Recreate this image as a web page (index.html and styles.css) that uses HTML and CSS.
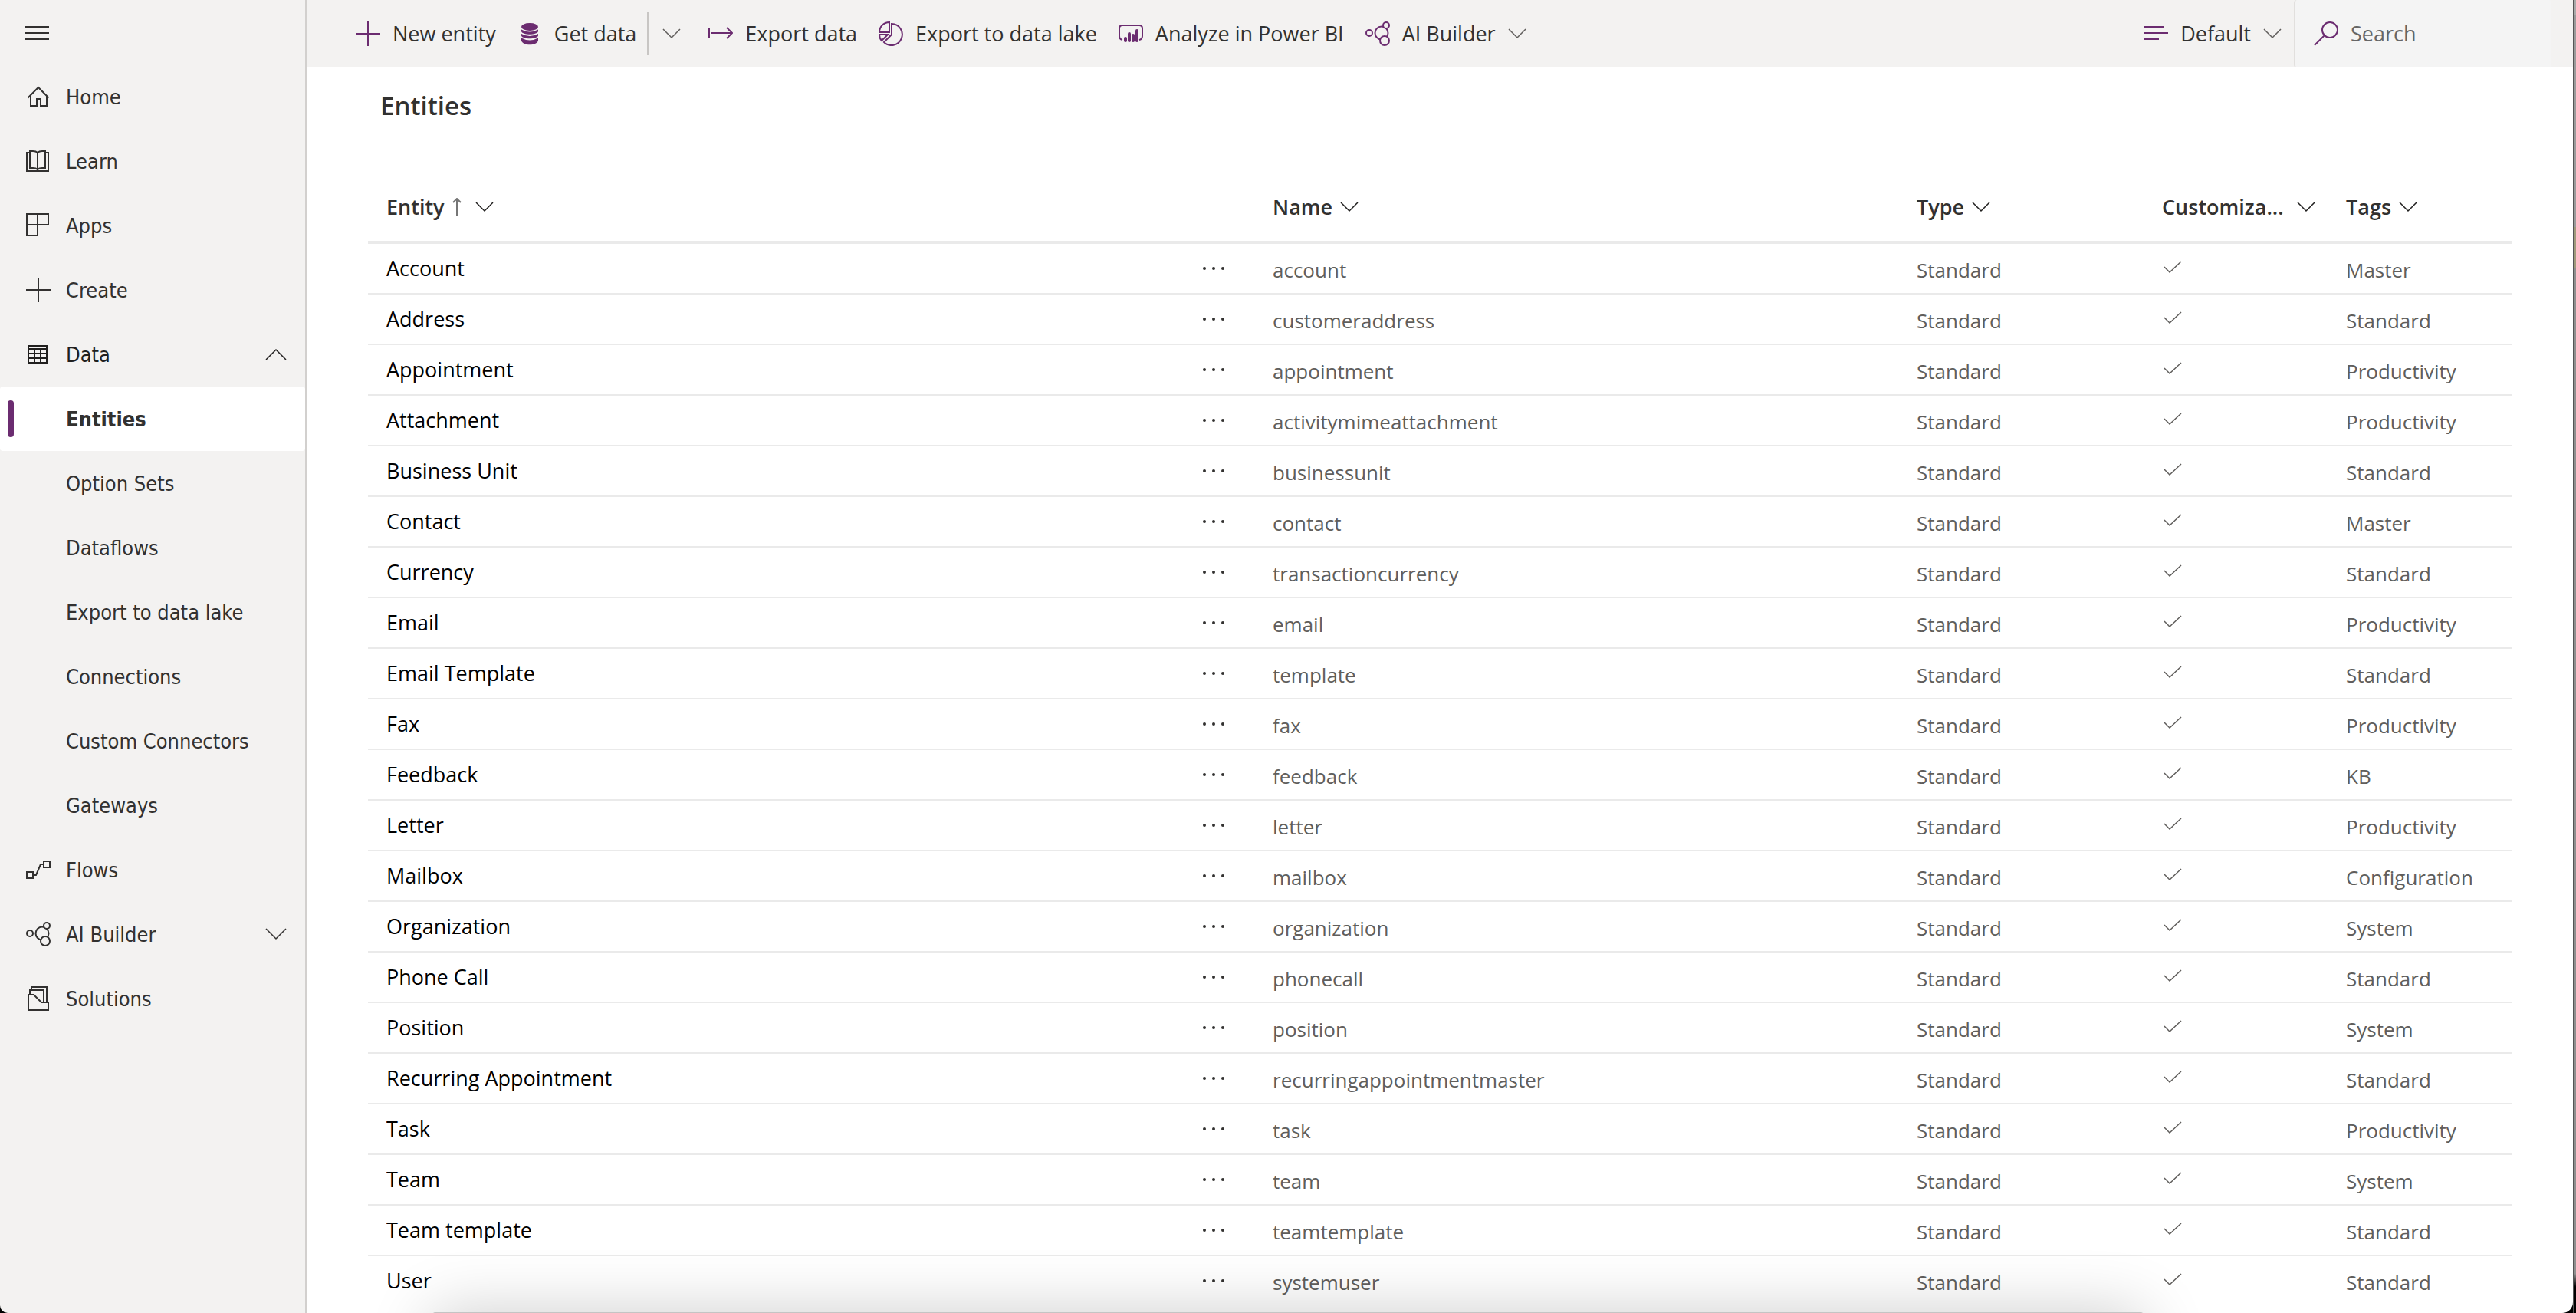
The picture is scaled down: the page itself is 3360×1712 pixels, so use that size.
FILE: index.html
```html
<!DOCTYPE html>
<html lang="en">
<head>
<meta charset="utf-8">
<title>Entities</title>
<link rel="stylesheet" href="styles.css">
</head>
<body>
<svg class="sprite" aria-hidden="true">
  <symbol id="chevron" viewBox="0 0 24 14"><path d="M1 1l11 11L23 1"/></symbol>
  <symbol id="plus" viewBox="0 0 32 32"><path d="M0 16H32M16 0V32"/></symbol>
  <symbol id="check" viewBox="0 0 24 16"><path d="M1 8l7 7L23 1"/></symbol>
  <symbol id="dots" viewBox="0 0 30 6"><circle cx="3" cy="3" r="2"/><circle cx="15" cy="3" r="2"/><circle cx="27" cy="3" r="2"/></symbol>
  <symbol id="ai" viewBox="0 0 32 32"><circle cx="21" cy="15" r="8.5"/><circle class="knock" cx="5" cy="15" r="4"/><circle class="knock" cx="27" cy="5" r="4"/><circle class="knock" cx="25" cy="25" r="6"/></symbol>
</svg>
<div class="shell">
  <nav class="sidebar" aria-label="Main">
    <button class="menu" aria-label="Toggle navigation"><svg class="icon" viewBox="0 0 32 32"><path d="M0 8H32M0 16H32M0 24H32"/></svg></button>
    <a class="nav" href="#"><svg class="icon" viewBox="0 0 32 32"><path d="M2.500 17.500L16 4l13.500 13.500M6 15V28h8V19h5v9h8V15"/></svg><span>Home</span></a>
    <a class="nav" href="#"><svg class="icon" viewBox="0 0 32 32"><path d="M5 5H1V29H29V5H25M5 3h4q4 0 6 2q2-2 6-2h4V25h-4q-4 0-6 2q-2-2-6-2H5zM15 5V28"/></svg><span>Learn</span></a>
    <a class="nav" href="#"><svg class="icon" viewBox="0 0 32 32"><path d="M1 1H29V15H1zM15 1V29H1V1"/></svg><span>Apps</span></a>
    <a class="nav" href="#"><svg class="icon"><use href="#plus"/></svg><span>Create</span></a>
    <button class="nav open" aria-expanded="true"><svg class="icon" viewBox="0 0 32 32"><path d="M3 5H27V27H3zM3 9H27M3 15H27M3 21H27M11 9V27M19 9V27"/></svg><span>Data</span><svg class="toggle up" viewBox="0 0 28 16"><path d="M1 1l13 13L27 1"/></svg></button>
    <a class="nav sub current" href="#" aria-current="page"><span>Entities</span></a>
    <a class="nav sub" href="#"><span>Option Sets</span></a>
    <a class="nav sub" href="#"><span>Dataflows</span></a>
    <a class="nav sub" href="#"><span>Export to data lake</span></a>
    <a class="nav sub" href="#"><span>Connections</span></a>
    <a class="nav sub" href="#"><span>Custom Connectors</span></a>
    <a class="nav sub" href="#"><span>Gateways</span></a>
    <a class="nav" href="#"><svg class="icon" viewBox="0 0 32 32"><path d="M1 19H9V27H1zM23 5H31V13H23zM9 23H13L19 9H23"/></svg><span>Flows</span></a>
    <button class="nav" aria-expanded="false"><svg class="icon"><use href="#ai"/></svg><span>AI Builder</span><svg class="toggle" viewBox="0 0 28 16"><path d="M1 1l13 13L27 1"/></svg></button>
    <a class="nav" href="#"><svg class="icon" viewBox="0 0 32 32"><path d="M3 31V11H10L20 21H29V31zM5 11V5H23V21M7 5V1H27V21"/></svg><span>Solutions</span></a>
  </nav>
  <div class="page">
    <header class="toolbar">
      <button class="command"><svg class="icon"><use href="#plus"/></svg>New entity</button>
      <div class="split">
        <button class="command"><svg class="icon solid" viewBox="0 0 32 32"><ellipse cx="16" cy="7" rx="11" ry="5"/><path d="M5 10.500q11 6 22 0V13c-2 5-20 5-22 0zM5 16q11 6 22 0v2.500c-2 5-20 5-22 0zM5 21.500q11 6 22 0V25c-2 7-20 7-22 0z"/></svg>Get data</button>
        <button class="more" aria-label="More data options"><svg class="chevron"><use href="#chevron"/></svg></button>
      </div>
      <button class="command"><svg class="icon" viewBox="0 0 32 32"><path d="M1 8V22M4 15H31M24 8l7 7-7 7"/></svg>Export data</button>
      <button class="command"><svg class="icon" viewBox="0 0 32 32"><path d="M14 1A13 13 0 0 0 1 14H14zM17 3A14 14 0 1 1 7 27L17 17zM1 17H12L4 25Q1 22 1 17z"/></svg>Export to data lake</button>
      <button class="command"><svg class="icon" viewBox="0 0 32 32"><path d="M5 24Q1 23 1 19V9q0-4 4-4H27q4 0 4 4V19q0 4-4 5"/><path class="bars" d="M9 22V25M14 16V25M19 18V25M24 12V25"/></svg>Analyze in Power BI</button>
      <button class="command"><svg class="icon"><use href="#ai"/></svg>AI Builder<svg class="chevron"><use href="#chevron"/></svg></button>
      <button class="command view"><svg class="icon" viewBox="0 0 32 32"><path d="M0 7H26M0 15H32M0 23H20"/></svg>Default<svg class="chevron"><use href="#chevron"/></svg></button>
      <label class="search"><svg class="icon" viewBox="0 0 32 32"><circle cx="21" cy="11" r="10"/><path d="M14 18L1 31"/></svg><input type="search" placeholder="Search" aria-label="Search"></label>
    </header>
    <main class="content">
      <h1>Entities</h1>
      <table>
        <colgroup><col><col class="c-more"><col class="c-name"><col class="c-type"><col class="c-custom"><col class="c-tags"></colgroup>
        <thead><tr>
          <th colspan="2"><button>Entity<svg class="sort" viewBox="0 0 12 24"><path d="M6 24V1M1 6l5-5 5 5"/></svg><svg class="chevron"><use href="#chevron"/></svg></button></th>
          <th><button>Name<svg class="chevron"><use href="#chevron"/></svg></button></th>
          <th><button>Type<svg class="chevron"><use href="#chevron"/></svg></button></th>
          <th><button class="spread">Customiza...<svg class="chevron"><use href="#chevron"/></svg></button></th>
          <th><button>Tags<svg class="chevron"><use href="#chevron"/></svg></button></th>
        </tr></thead>
        <tbody>
          <tr><td><a href="#">Account</a></td><td><button aria-label="More"><svg class="dots"><use href="#dots"/></svg></button></td><td>account</td><td>Standard</td><td><svg class="check"><use href="#check"/></svg></td><td>Master</td></tr>
          <tr><td><a href="#">Address</a></td><td><button aria-label="More"><svg class="dots"><use href="#dots"/></svg></button></td><td>customeraddress</td><td>Standard</td><td><svg class="check"><use href="#check"/></svg></td><td>Standard</td></tr>
          <tr><td><a href="#">Appointment</a></td><td><button aria-label="More"><svg class="dots"><use href="#dots"/></svg></button></td><td>appointment</td><td>Standard</td><td><svg class="check"><use href="#check"/></svg></td><td>Productivity</td></tr>
          <tr><td><a href="#">Attachment</a></td><td><button aria-label="More"><svg class="dots"><use href="#dots"/></svg></button></td><td>activitymimeattachment</td><td>Standard</td><td><svg class="check"><use href="#check"/></svg></td><td>Productivity</td></tr>
          <tr><td><a href="#">Business Unit</a></td><td><button aria-label="More"><svg class="dots"><use href="#dots"/></svg></button></td><td>businessunit</td><td>Standard</td><td><svg class="check"><use href="#check"/></svg></td><td>Standard</td></tr>
          <tr><td><a href="#">Contact</a></td><td><button aria-label="More"><svg class="dots"><use href="#dots"/></svg></button></td><td>contact</td><td>Standard</td><td><svg class="check"><use href="#check"/></svg></td><td>Master</td></tr>
          <tr><td><a href="#">Currency</a></td><td><button aria-label="More"><svg class="dots"><use href="#dots"/></svg></button></td><td>transactioncurrency</td><td>Standard</td><td><svg class="check"><use href="#check"/></svg></td><td>Standard</td></tr>
          <tr><td><a href="#">Email</a></td><td><button aria-label="More"><svg class="dots"><use href="#dots"/></svg></button></td><td>email</td><td>Standard</td><td><svg class="check"><use href="#check"/></svg></td><td>Productivity</td></tr>
          <tr><td><a href="#">Email Template</a></td><td><button aria-label="More"><svg class="dots"><use href="#dots"/></svg></button></td><td>template</td><td>Standard</td><td><svg class="check"><use href="#check"/></svg></td><td>Standard</td></tr>
          <tr><td><a href="#">Fax</a></td><td><button aria-label="More"><svg class="dots"><use href="#dots"/></svg></button></td><td>fax</td><td>Standard</td><td><svg class="check"><use href="#check"/></svg></td><td>Productivity</td></tr>
          <tr><td><a href="#">Feedback</a></td><td><button aria-label="More"><svg class="dots"><use href="#dots"/></svg></button></td><td>feedback</td><td>Standard</td><td><svg class="check"><use href="#check"/></svg></td><td>KB</td></tr>
          <tr><td><a href="#">Letter</a></td><td><button aria-label="More"><svg class="dots"><use href="#dots"/></svg></button></td><td>letter</td><td>Standard</td><td><svg class="check"><use href="#check"/></svg></td><td>Productivity</td></tr>
          <tr><td><a href="#">Mailbox</a></td><td><button aria-label="More"><svg class="dots"><use href="#dots"/></svg></button></td><td>mailbox</td><td>Standard</td><td><svg class="check"><use href="#check"/></svg></td><td>Configuration</td></tr>
          <tr><td><a href="#">Organization</a></td><td><button aria-label="More"><svg class="dots"><use href="#dots"/></svg></button></td><td>organization</td><td>Standard</td><td><svg class="check"><use href="#check"/></svg></td><td>System</td></tr>
          <tr><td><a href="#">Phone Call</a></td><td><button aria-label="More"><svg class="dots"><use href="#dots"/></svg></button></td><td>phonecall</td><td>Standard</td><td><svg class="check"><use href="#check"/></svg></td><td>Standard</td></tr>
          <tr><td><a href="#">Position</a></td><td><button aria-label="More"><svg class="dots"><use href="#dots"/></svg></button></td><td>position</td><td>Standard</td><td><svg class="check"><use href="#check"/></svg></td><td>System</td></tr>
          <tr><td><a href="#">Recurring Appointment</a></td><td><button aria-label="More"><svg class="dots"><use href="#dots"/></svg></button></td><td>recurringappointmentmaster</td><td>Standard</td><td><svg class="check"><use href="#check"/></svg></td><td>Standard</td></tr>
          <tr><td><a href="#">Task</a></td><td><button aria-label="More"><svg class="dots"><use href="#dots"/></svg></button></td><td>task</td><td>Standard</td><td><svg class="check"><use href="#check"/></svg></td><td>Productivity</td></tr>
          <tr><td><a href="#">Team</a></td><td><button aria-label="More"><svg class="dots"><use href="#dots"/></svg></button></td><td>team</td><td>Standard</td><td><svg class="check"><use href="#check"/></svg></td><td>System</td></tr>
          <tr><td><a href="#">Team template</a></td><td><button aria-label="More"><svg class="dots"><use href="#dots"/></svg></button></td><td>teamtemplate</td><td>Standard</td><td><svg class="check"><use href="#check"/></svg></td><td>Standard</td></tr>
          <tr><td><a href="#">User</a></td><td><button aria-label="More"><svg class="dots"><use href="#dots"/></svg></button></td><td>systemuser</td><td>Standard</td><td><svg class="check"><use href="#check"/></svg></td><td>Standard</td></tr>
        </tbody>
      </table>
    </main>
  </div>
  <div class="backdrop"></div>
</div>
<div class="dock"></div>
</body>
</html>
```
FILE: styles.css
```css
* { box-sizing: border-box; }
html { background: #000; }
body {
  margin: 0;
  overflow: hidden;
  font: 27px/36px "Open Sans", "Noto Sans", sans-serif;
  color: #323130;
}
button, input { font: inherit; color: inherit; border: 0; padding: 0; background: none; }
button { display: flex; align-items: center; cursor: pointer; }
a { color: inherit; text-decoration: none; }
svg { fill: none; stroke: currentColor; stroke-width: 2; flex: none; display: block; }
.sprite { position: absolute; width: 0; height: 0; }
.icon { width: 32px; height: 32px; }
.chevron { width: 24px; height: 14px; stroke-width: 1.5; }
.knock { fill: #f3f2f1; }

.shell { display: grid; grid-template-columns: 400px minmax(0, 1fr) 4px; min-height: 100vh; }

/* Sidebar */
.sidebar {
  background: #f3f2f1;
  border-right: 2px solid #d2d0ce;
  border-bottom-left-radius: 10px;
  font-family: "DejaVu Sans Condensed", "Noto Sans", sans-serif;
}
.menu { height: 84px; padding: 2px 32px 0; }
.nav { display: flex; align-items: center; gap: 20px; width: 100%; height: 84px; padding: 0 24px 0 34px; }
.nav span { padding-top: 2px; }
.open { color: #201f1e; }
.toggle { width: 28px; height: 16px; margin-left: auto; stroke-width: 1.5; }
.up { transform: rotate(180deg); }
.sub { padding-left: 86px; }
.current { position: relative; background: #fff; border-radius: 4px; font-weight: 700; }
.current::before {
  content: "";
  position: absolute;
  left: 10px;
  top: 18px;
  width: 8px;
  height: 48px;
  border-radius: 4px;
  background: #6b2c70;
}

/* Command bar */
.page { background: #fff; border-bottom-right-radius: 14px; }
.toolbar { display: flex; align-items: center; gap: 28px; height: 88px; padding: 0 28px 0 64px; background: #f3f2f1; }
.command { gap: 16px; white-space: nowrap; }
.toolbar .icon { color: #6b2c70; }
.toolbar .chevron { color: #605e5c; }
.solid { fill: currentColor; stroke: none; }
.bars { stroke-width: 4; stroke-linecap: round; }
.split { display: flex; align-items: center; gap: 14px; }
.more { height: 56px; padding: 0 8px 0 18px; border-left: 2px solid #c8c6c4; }
.view { margin-left: auto; margin-right: -12px; }
.search { display: flex; align-items: center; gap: 16px; width: 336px; height: 88px; padding-left: 24px; background: #f4f4f4; border-left: 2px solid #e1dfdd; border-radius: 4px; }
.search input { width: 240px; outline: 0; }
.search input::placeholder { color: #666; opacity: 1; }

/* Entity list */
.content { padding: 22px 80px 8px; }
h1 { margin: 0 0 0 16px; font-size: 33px; line-height: 56px; font-weight: 600; }
table { width: 100%; margin-top: 44px; table-layout: fixed; border-collapse: separate; border-spacing: 0; }
.c-more { width: 92px; }
.c-name { width: 840px; }
.c-type { width: 320px; }
.c-custom, .c-tags { width: 240px; }
th { height: 108px; padding: 16px 0 0 24px; text-align: left; font-weight: 600; border-bottom: 4px solid #eaeaea; }
th button { gap: 10px; }
th .chevron { color: #201f1e; }
.sort { width: 12px; height: 24px; color: #767676; margin-right: 8px; }
.spread { justify-content: space-between; width: 200px; }
td { height: 66px; padding: 3px 0 0 24px; font-size: 26px; color: #605e5c; border-bottom: 2px solid #eaeaea; white-space: nowrap; }
td:first-child { padding-top: 0; font-size: 27px; color: #000; }
td:nth-child(2) { padding-top: 0; color: #323130; }
td:nth-child(5) { padding: 0 0 4px 26px; }
tbody tr:last-child td { border-bottom-color: transparent; }
.dots { width: 30px; height: 6px; fill: currentColor; stroke: none; }
.check { width: 24px; height: 16px; stroke-width: 1.5; }

/* Window edge and dock shadow */
.backdrop {
  border-left: 1px solid #555;
  background: linear-gradient(#aaa 0 20px, #9b9b9b 20px 296px, #a09a7c 296px 350px, #8f8f8f 350px 97%, #000 98%);
}
.dock {
  position: fixed;
  left: 564px;
  right: 564px;
  bottom: -199px;
  height: 200px;
  background: #c4c4c4;
  border-radius: 4px;
  box-shadow: 0 0 84px rgba(0, 0, 0, 0.2);
  pointer-events: none;
}
```
